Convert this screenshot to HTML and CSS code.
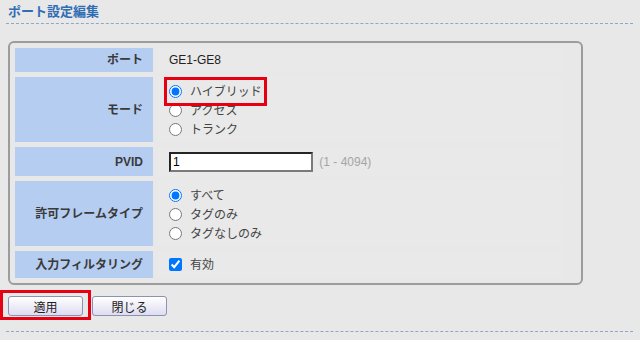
FILE: index.html
```html
<!DOCTYPE html>
<html lang="ja">
<head>
  <meta charset="UTF-8" />
  <title>ポート設定編集</title>
  <link rel="stylesheet" href="styles.css">
</head>
<body>
  <h2 class="title">ポート設定編集</h2>
  <div class="rule"></div>

  <div class="panel">
    <table class="form-table">
      <tr class="row-port">
        <th>ポート</th>
        <td>GE1-GE8</td>
      </tr>
      <tr class="row-mode">
        <th>モード</th>
        <td>
          <label class="opt mark"><input type="radio" name="mode" checked /><span>ハイブリッド</span></label>
          <label class="opt"><input type="radio" name="mode" /><span>アクセス</span></label>
          <label class="opt"><input type="radio" name="mode" /><span>トランク</span></label>
        </td>
      </tr>
      <tr class="row-pvid">
        <th>PVID</th>
        <td>
          <input type="text" class="pvid" value="1" />
          <span class="hint">(1 - 4094)</span>
        </td>
      </tr>
      <tr class="row-frame">
        <th>許可フレームタイプ</th>
        <td>
          <label class="opt"><input type="radio" name="frame" checked /><span>すべて</span></label>
          <label class="opt"><input type="radio" name="frame" /><span>タグのみ</span></label>
          <label class="opt"><input type="radio" name="frame" /><span>タグなしのみ</span></label>
        </td>
      </tr>
      <tr class="row-filter">
        <th>入力フィルタリング</th>
        <td>
          <label class="opt"><input type="checkbox" checked /><span>有効</span></label>
        </td>
      </tr>
    </table>
  </div>

  <div class="actions">
    <span class="btn-mark"><button type="button" class="btn">適用</button></span>
    <button type="button" class="btn btn-close">閉じる</button>
  </div>
  <div class="rule rule-bottom"></div>
</body>
</html>
```

FILE: styles.css
```css
body {
  margin: 0;
  background-color: #e8e8e8;
  font-family: "Liberation Sans", "Noto Sans CJK JP", sans-serif;
  font-size: 12px;
  color: #333;
}
.title {
  margin: 0 8px;
  padding-top: 4px;
  height: 19px;
  font-size: 13px;
  line-height: 16px;
  font-weight: bold;
  color: #2f6db4;
}
.rule {
  margin: 0 7px 0 6px;
  border-top: 1px dashed #8ea7c6;
}
.panel {
  margin: 17px 0 0 8px;
  width: 571px;
  border: 2px solid #9c9c9c;
  border-radius: 6px;
}
.form-table {
  border-spacing: 5px;
  width: 558px;
}
.form-table th {
  width: 128px;
  padding: 0 10px 0 0;
  background-color: #b4cdf1;
  text-align: right;
  font-weight: bold;
  line-height: 16px;
  color: #3a3a3a;
}
.form-table td {
  padding: 0 0 0 11px;
  background-color: #e9e9e9;
  line-height: 16px;
  color: #222;
}
.row-port th, .row-port td { height: 24px; }
.row-mode th, .row-frame th { height: 65px; }
.row-mode td, .row-frame td {
  height: 63px;
  padding-top: 2px;
}
.row-pvid th, .row-pvid td { height: 29px; }
.row-filter th, .row-filter td { height: 27px; }
.opt {
  display: flex;
  align-items: center;
  width: fit-content;
  height: 19px;
  color: #444;
}
.opt input {
  width: 13px;
  height: 13px;
  margin: 0 8px 0 0;
}
.mark {
  outline: 3px solid #e60012;
  outline-offset: 2px;
}
.pvid {
  box-sizing: border-box;
  width: 144px;
  height: 20px;
  margin: 0;
  padding: 0 2px;
  border: 2px inset #7a7a7a;
  background: #fff;
  font-family: "Liberation Sans", sans-serif;
  font-size: 12px;
  vertical-align: middle;
}
.hint {
  margin-left: 3px;
  color: #a5a5a5;
  vertical-align: middle;
}
.actions {
  margin-top: 5px;
  display: flex;
  align-items: flex-start;
}
.btn-mark {
  display: inline-block;
  padding: 3px 5px 1px 5px;
  border: 3px solid #e60012;
}
.btn {
  display: block;
  width: 75px;
  height: 20px;
  padding: 0;
  border: 1px solid #8b92b3;
  border-radius: 3px;
  background: linear-gradient(#ffffff, #dedcf0);
  font-family: "Liberation Sans", "Noto Sans CJK JP", sans-serif;
  font-size: 12px;
  color: #222;
  cursor: pointer;
}
.btn-close {
  margin: 6px 0 0 1px;
}
.rule-bottom {
  margin-top: 11px;
}
```
